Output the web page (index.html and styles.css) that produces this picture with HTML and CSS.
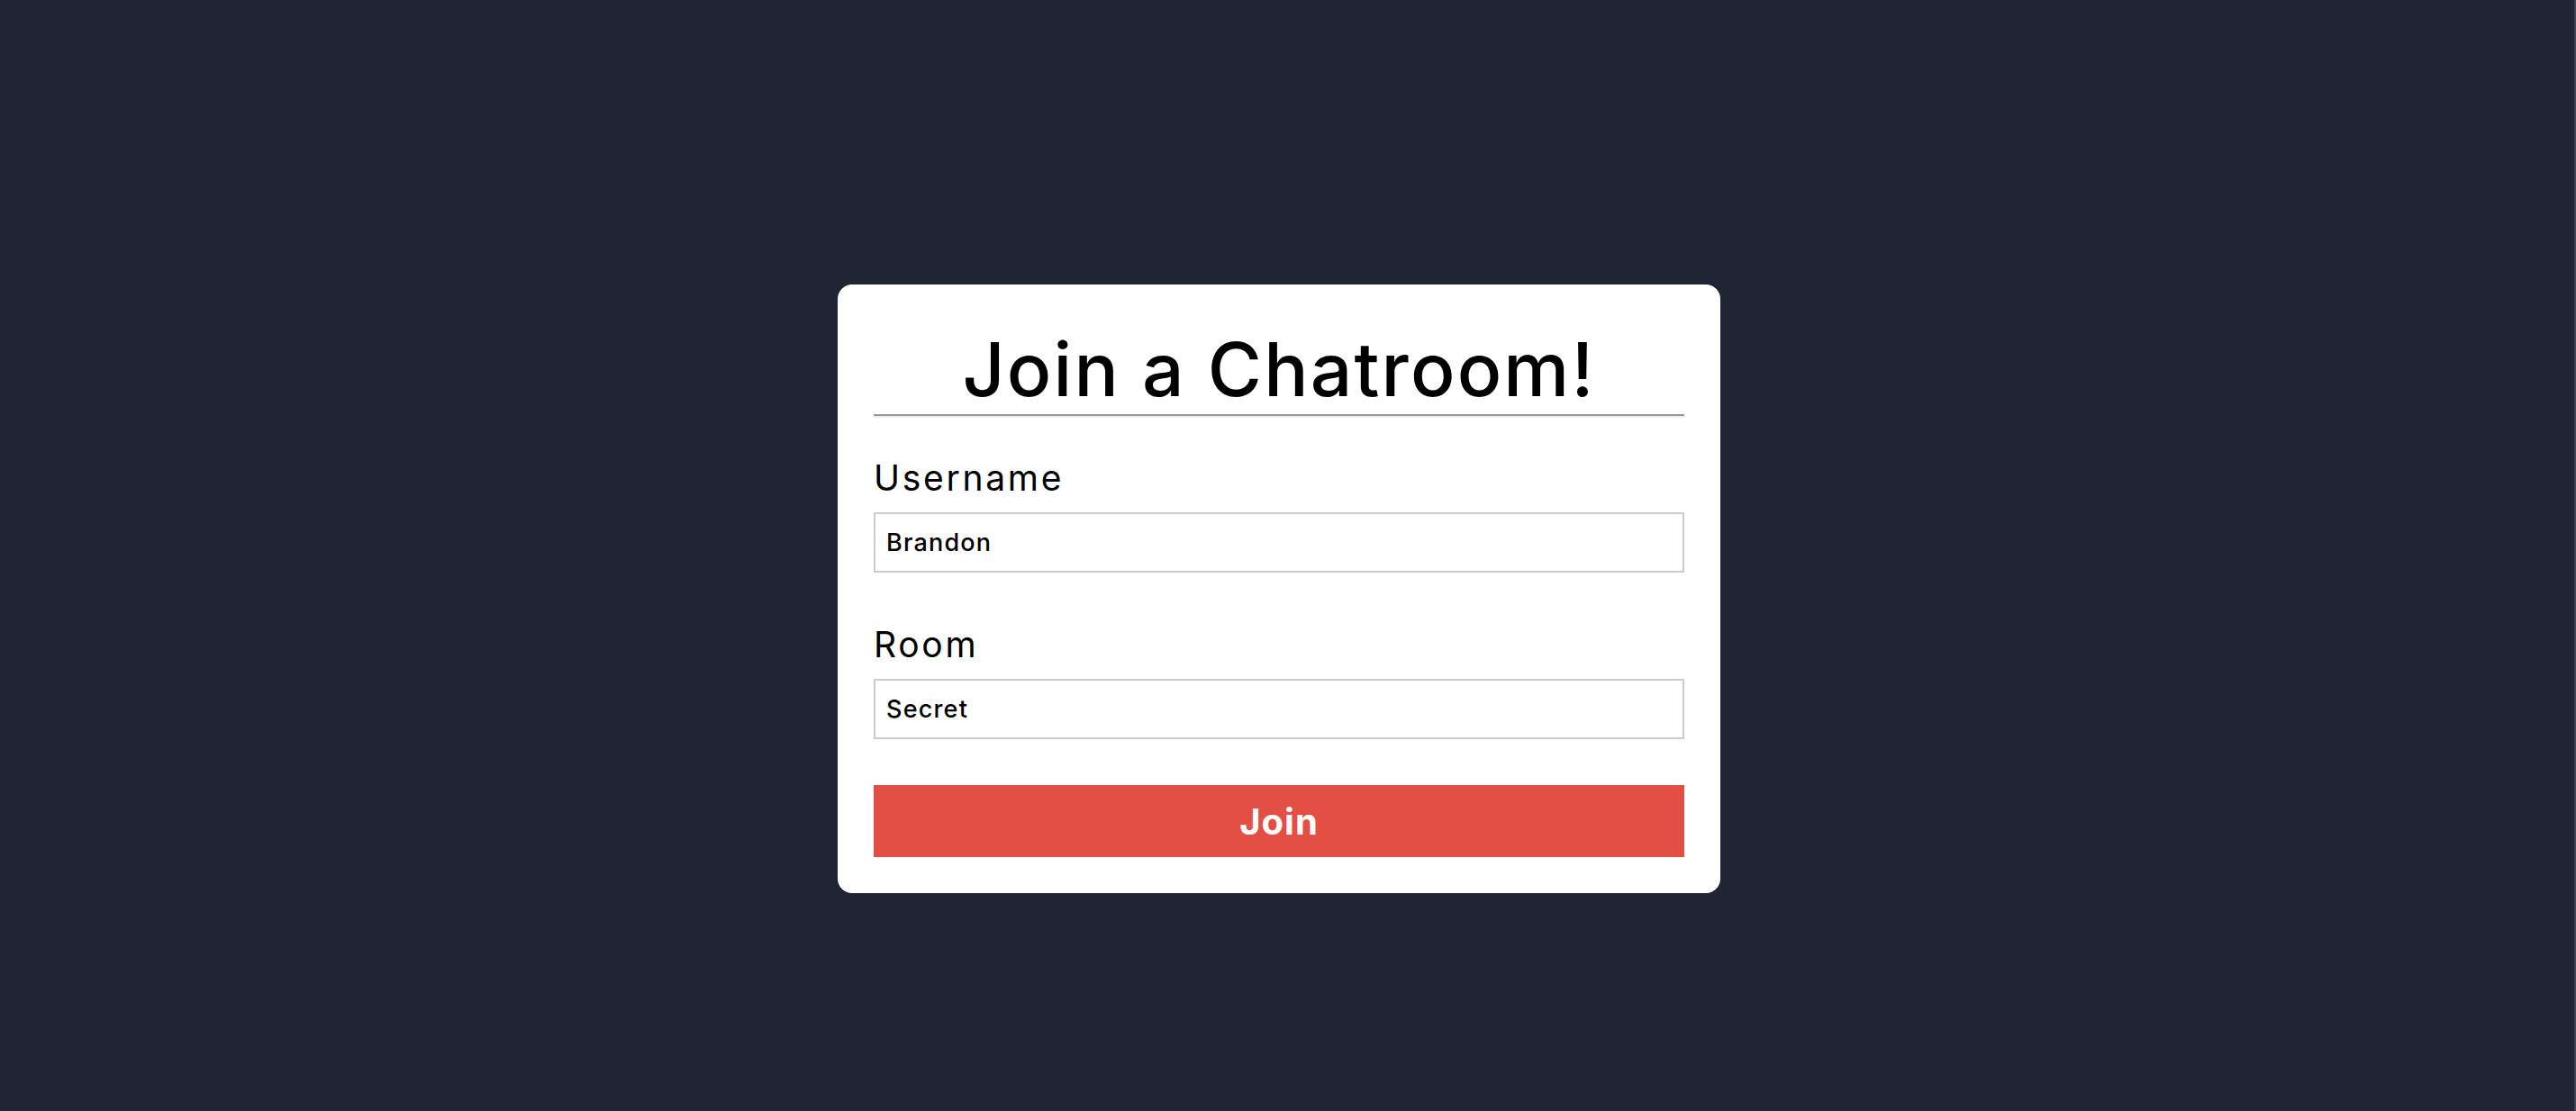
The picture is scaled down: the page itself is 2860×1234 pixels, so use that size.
FILE: index.html
```html
<!DOCTYPE html>
<html lang="en">
<head>
<meta charset="utf-8">
<title>Join a Chatroom</title>
<link rel="stylesheet" href="styles.css">
</head>
<body>
<main class="page">
  <form class="card">
    <h1 class="title">Join a Chatroom!</h1>
    <hr class="divider">
    <label class="label" for="username">Username</label>
    <input class="field" id="username" type="text" value="Brandon">
    <label class="label label-room" for="room">Room</label>
    <input class="field" id="room" type="text" value="Secret">
    <button class="btn" type="button">Join</button>
  </form>
</main>
</body>
</html>
```

FILE: styles.css
```css
html, body {
  margin: 0;
  padding: 0;
  height: 100%;
}
body {
  background: #1f2533;
  border-right: 2px solid #3e4452;
  box-sizing: border-box;
  font-family: Inter, Roboto, "Liberation Sans", sans-serif;
  color: #000;
}
.page {
  display: flex;
  justify-content: center;
  align-items: flex-start;
  padding-top: 316px;
  padding-right: 18px;
}
.card {
  width: 980px;
  box-sizing: border-box;
  background: #fff;
  border-radius: 16px;
  padding: 40px;
  display: flex;
  flex-direction: column;
}
.title {
  margin: 0;
  padding-top: 5px;
  font-size: 82px;
  line-height: 99px;
  font-weight: 520;
  letter-spacing: 2.2px;
  text-align: center;
}
.divider {
  margin: 0;
  height: 0;
  border: 0;
  border-top: 2px solid #9a9a9a;
  border-bottom: 2px solid #eeeeee;
}
.label {
  margin-top: 43px;
  margin-bottom: 14px;
  font-size: 39px;
  line-height: 48px;
  font-weight: 420;
  letter-spacing: 2.7px;
}
.label-room {
  margin-top: 56px;
}
.field {
  margin: 0;
  height: 67px;
  box-sizing: border-box;
  border: 2px solid #cbcbcb;
  padding: 0 12px;
  font-family: Inter, Roboto, "Liberation Sans", sans-serif;
  font-size: 27px;
  font-weight: 450;
  letter-spacing: 1.2px;
  color: #000;
  background: #fff;
  outline: none;
}
.btn {
  margin-top: 51px;
  height: 80px;
  border: 0;
  background: #e34f44;
  color: #fff;
  font-family: Inter, Roboto, "Liberation Sans", sans-serif;
  font-size: 40px;
  font-weight: 700;
  letter-spacing: 1px;
  cursor: pointer;
}
```
